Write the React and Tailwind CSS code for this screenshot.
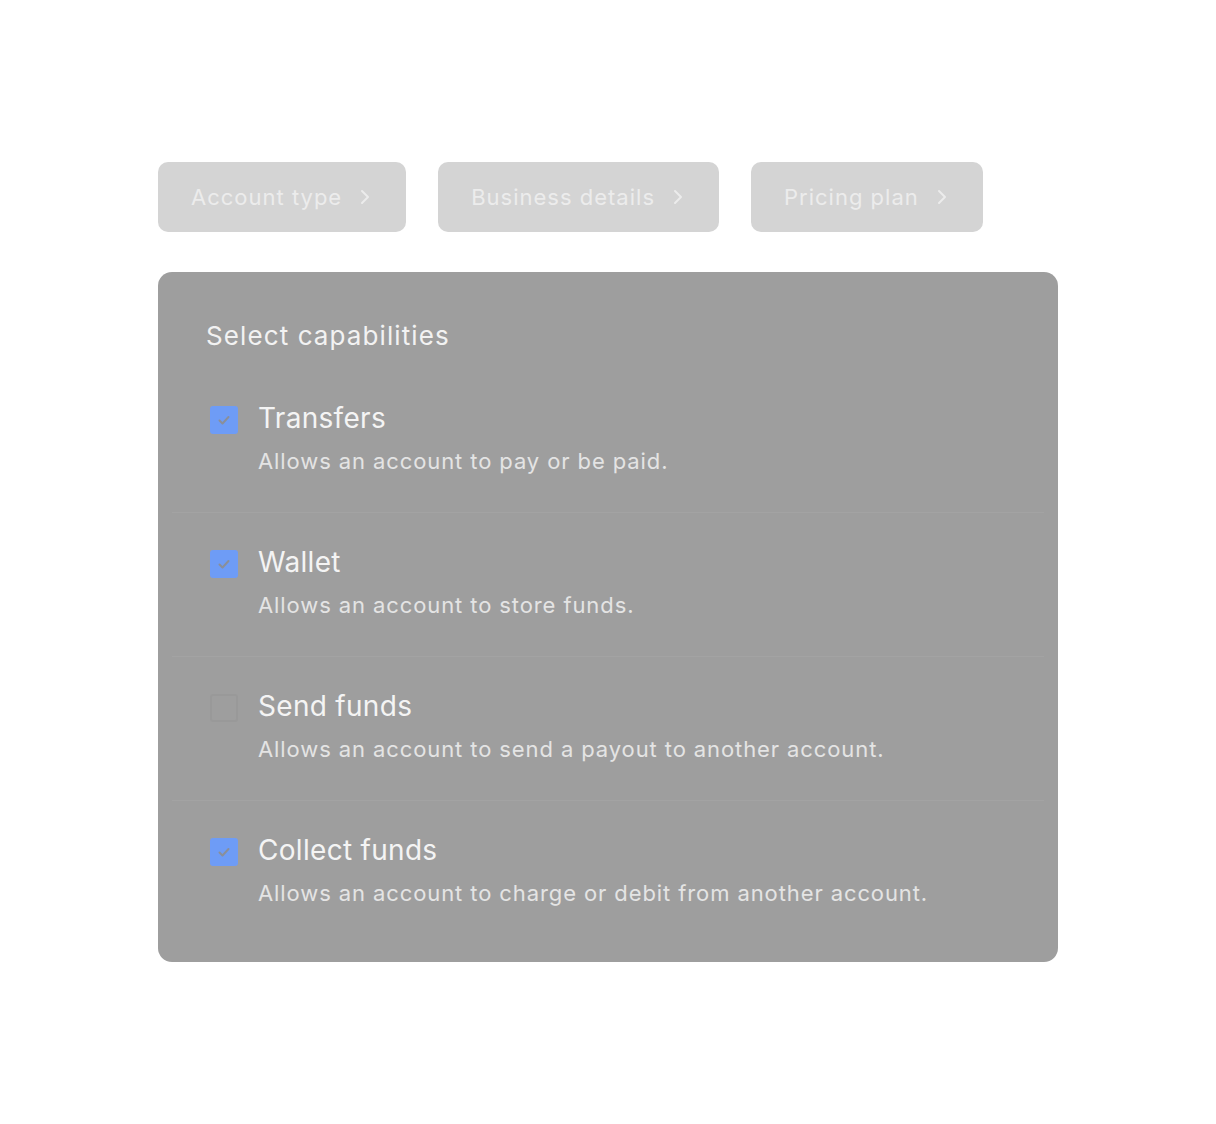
import React, { useState } from "react";

const steps = ["Account type", "Business details", "Pricing plan"];

const capabilities = [
  { id: "transfers", title: "Transfers", desc: "Allows an account to pay or be paid.", checked: true },
  { id: "wallet", title: "Wallet", desc: "Allows an account to store funds.", checked: true },
  { id: "send", title: "Send funds", desc: "Allows an account to send a payout to another account.", checked: false },
  { id: "collect", title: "Collect funds", desc: "Allows an account to charge or debit from another account.", checked: true },
];

function Chevron() {
  return (
    <svg width="14" height="18" viewBox="0 0 14 18" fill="none" stroke="currentColor" strokeWidth="2" strokeLinecap="round" strokeLinejoin="round">
      <path d="M4 3l6 6-6 6" />
    </svg>
  );
}

function Checkbox({ checked, onClick }) {
  return (
    <button
      onClick={onClick}
      className={`mt-[6px] ml-1 flex h-7 w-7 shrink-0 items-center justify-center rounded-[3px] ${
        checked ? "bg-[#6e9cf6]" : "border-2 border-[#999999]"
      }`}
    >
      {checked && (
        <svg width="16" height="16" viewBox="0 0 16 16" fill="none" stroke="#8a8f99" strokeWidth="2" strokeLinecap="round" strokeLinejoin="round">
          <path d="M3.5 8.5l3 3 6-6.5" />
        </svg>
      )}
    </button>
  );
}

export default function App() {
  const [items, setItems] = useState(capabilities);

  const toggle = (id) => {
    setItems((prev) => prev.map((c) => (c.id === id ? { ...c, checked: !c.checked } : c)));
  };

  return (
    <div className="min-h-screen bg-white pt-[162px] pl-[158px] font-['Inter',sans-serif]">
      {/* Steps */}
      <div className="flex gap-8">
        {steps.map((s) => (
          <div
            key={s}
            className="flex h-[70px] items-center gap-4 rounded-[10px] bg-[#d4d4d4] pl-[33px] pr-[34px] text-[22px] tracking-[1px] text-[#ececec]"
          >
            <span>{s}</span>
            <Chevron />
          </div>
        ))}
      </div>

      {/* Card */}
      <div className="mt-10 w-[900px] rounded-[14px] bg-[#9e9e9e] pt-12 pb-[18px]">
        <h2 className="px-12 text-[26px] leading-8 tracking-[1.1px] text-[#f2f2f2]">Select capabilities</h2>
        <div className="mt-[17px] px-[14px]">
          {items.map((c, i) => (
            <div
              key={c.id}
              className={`flex gap-5 px-[34px] pt-[31px] pb-[36px] ${
                i < items.length - 1 ? "border-b border-[#a3a3a3]" : ""
              }`}
            >
              <Checkbox checked={c.checked} onClick={() => toggle(c.id)} />
              <div>
                <div className="text-[28px] leading-9 tracking-[0.3px] text-[#f4f4f4]">{c.title}</div>
                <div className="mt-[10px] text-[22px] leading-[30px] tracking-[0.9px] text-[#e4e4e4]">{c.desc}</div>
              </div>
            </div>
          ))}
        </div>
      </div>
    </div>
  );
}
